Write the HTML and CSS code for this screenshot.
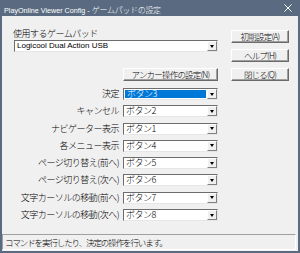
FILE: index.html
```html
<!DOCTYPE html>
<html lang="ja">
<head>
<meta charset="utf-8">
<title>PlayOnline Viewer Config</title>
<link rel="stylesheet" href="styles.css">
</head>
<body>
<div class="window">
  <div class="titlebar">
    <span class="title"><span class="t-latin">PlayOnline Viewer Config - </span><span class="t-jp">ゲームパッドの設定</span></span>
    <svg class="close" width="8" height="8" viewBox="0 0 8 8"><path d="M0.5 0.5L7.5 7.5M7.5 0.5L0.5 7.5" stroke="#ffffff" stroke-width="1" fill="none"/></svg>
  </div>
  <div class="client">
    <div class="main">
      <div class="left">
        <div class="label">使用するゲームパッド</div>
        <div class="combo">
          <span class="combo-text latin">Logicool Dual Action USB</span>
          <span class="arrow"><span class="tri"></span></span>
        </div>
        <div class="anchor-row"><div class="btn anchor">アンカー操作の設定(N)</div></div>
        <div class="rows">
          <div class="row-label">決定</div>
          <div class="combo small"><span class="combo-text selected">ボタン3</span><span class="arrow"><span class="tri"></span></span></div>
          <div class="row-label">キャンセル</div>
          <div class="combo small"><span class="combo-text">ボタン2</span><span class="arrow"><span class="tri"></span></span></div>
          <div class="row-label">ナビゲーター表示</div>
          <div class="combo small"><span class="combo-text">ボタン1</span><span class="arrow"><span class="tri"></span></span></div>
          <div class="row-label">各メニュー表示</div>
          <div class="combo small"><span class="combo-text">ボタン4</span><span class="arrow"><span class="tri"></span></span></div>
          <div class="row-label">ページ切り替え(前へ)</div>
          <div class="combo small"><span class="combo-text">ボタン5</span><span class="arrow"><span class="tri"></span></span></div>
          <div class="row-label">ページ切り替え(次へ)</div>
          <div class="combo small"><span class="combo-text">ボタン6</span><span class="arrow"><span class="tri"></span></span></div>
          <div class="row-label">文字カーソルの移動(前へ)</div>
          <div class="combo small"><span class="combo-text">ボタン7</span><span class="arrow"><span class="tri"></span></span></div>
          <div class="row-label">文字カーソルの移動(次へ)</div>
          <div class="combo small"><span class="combo-text">ボタン8</span><span class="arrow"><span class="tri"></span></span></div>
        </div>
      </div>
      <div class="right">
        <div class="btn side">初期設定(A)</div>
        <div class="btn side">ヘルプ(H)</div>
        <div class="btn side">閉じる(Q)</div>
      </div>
    </div>
    <div class="status">コマンドを実行したり、決定の操作を行います。</div>
  </div>
</div>
</body>
</html>
```

FILE: styles.css
```css
html, body {
  margin: 0;
  padding: 0;
}
body {
  width: 300px;
  height: 253px;
  overflow: hidden;
  font-family: "Noto Sans CJK JP", sans-serif;
  font-weight: 300;
  color: #000;
}
.window {
  width: 300px;
  height: 253px;
  box-sizing: border-box;
  background: #5a6b81;
  padding: 0 2px 2px 2px;
  display: flex;
  flex-direction: column;
}
.titlebar {
  height: 16px;
  flex: none;
  display: flex;
  align-items: center;
  justify-content: space-between;
  color: #ffffff;
  padding: 0 6px 0 2px;
}
.title {
  white-space: nowrap;
  line-height: 16px;
}
.t-latin {
  font-family: "Liberation Sans", sans-serif;
  font-weight: 400;
  font-size: 7.2px;
}
.t-jp {
  font-size: 8px;
  letter-spacing: -0.3px;
}
.close {
  display: block;
}
.client {
  flex: 1;
  background: #f0f0f0;
  display: flex;
  flex-direction: column;
}
.main {
  display: flex;
  padding-top: 12px;
}
.left {
  margin-left: 12px;
  width: 204px;
  display: flex;
  flex-direction: column;
}
.right {
  margin-left: 13px;
  width: 58px;
  padding-top: 2px;
  display: flex;
  flex-direction: column;
  gap: 6px;
}
.label {
  font-size: 9px;
  line-height: 11px;
  height: 11px;
  letter-spacing: -0.5px;
  margin-left: -1px;
  white-space: nowrap;
}
.combo {
  margin-top: 1px;
  height: 12px;
  box-sizing: border-box;
  border: 1px solid;
  border-color: #6d6d6d #e6e6e6 #e6e6e6 #6d6d6d;
  background: #ffffff;
  display: flex;
  align-items: stretch;
}
.combo.small {
  margin-top: 0;
}
.combo-text {
  flex: 1;
  font-size: 9px;
  line-height: 10px;
  letter-spacing: -0.5px;
  padding-left: 2px;
  white-space: nowrap;
}
.combo-text.latin {
  font-family: "Liberation Sans", sans-serif;
  font-weight: 400;
  font-size: 8px;
  letter-spacing: 0;
}
.combo-text.selected {
  background: #0078d7;
  color: #ffffff;
  margin: 1px;
  line-height: 8px;
}
.arrow {
  width: 10px;
  flex: none;
  box-sizing: border-box;
  background: #f0f0f0;
  border: 1px solid;
  border-color: #ffffff #808080 #808080 #ffffff;
  display: flex;
  align-items: center;
  justify-content: center;
}
.tri {
  width: 0;
  height: 0;
  border-left: 2.5px solid transparent;
  border-right: 2.5px solid transparent;
  border-top: 3px solid #000;
}
.anchor-row {
  display: flex;
  justify-content: flex-end;
  margin-top: 16px;
}
.btn {
  height: 13px;
  box-sizing: border-box;
  background: #f0f0f0;
  border: 1px solid;
  border-color: #ffffff #6a6a6a #6a6a6a #ffffff;
  box-shadow: inset -1px -1px 0 #a0a0a0;
  font-size: 8.5px;
  line-height: 11px;
  letter-spacing: -0.8px;
  text-align: center;
  white-space: nowrap;
}
.btn.anchor {
  width: 95px;
}
.btn.side {
  width: 58px;
}
.rows {
  margin-top: 7px;
  display: grid;
  grid-template-columns: 1fr 95px;
  grid-auto-rows: 12px;
  column-gap: 4px;
  row-gap: 5.3px;
}
.row-label {
  font-size: 9px;
  line-height: 12px;
  letter-spacing: -0.5px;
  text-align: right;
  white-space: nowrap;
}
.status {
  margin: auto 2px 1px 0;
  height: 16px;
  box-sizing: border-box;
  border: 1px solid;
  border-color: #a0a0a0 #ffffff #ffffff #a0a0a0;
  font-size: 8.5px;
  line-height: 14px;
  letter-spacing: -1.1px;
  padding-left: 2px;
  white-space: nowrap;
  overflow: hidden;
}
```
